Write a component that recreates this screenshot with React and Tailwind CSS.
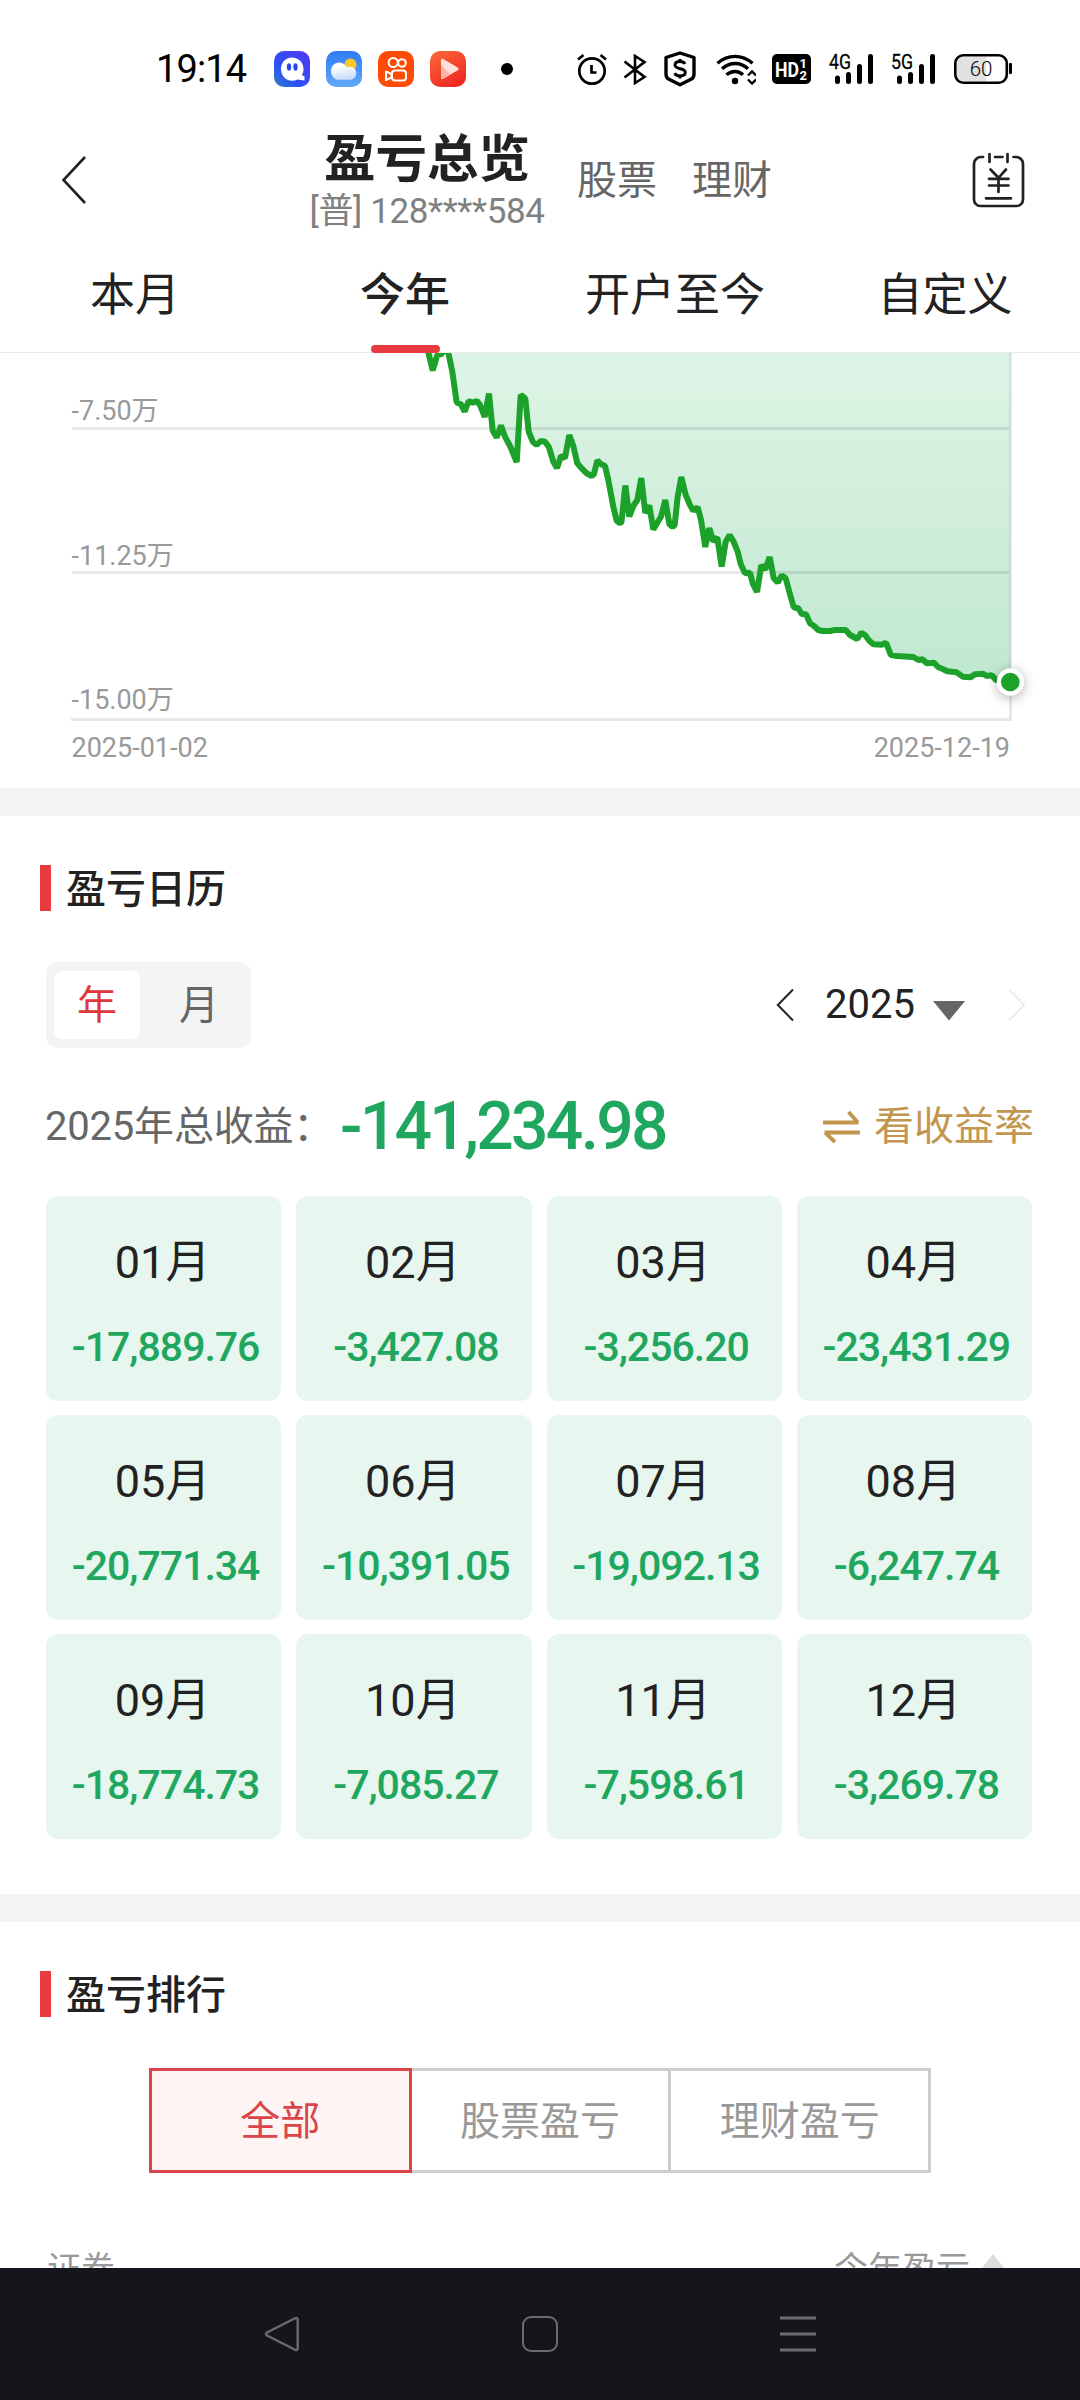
import { useState } from "react";
import clsx from "clsx";

const TABS = ["本月", "今年", "开户至今", "自定义"];

const MONTHS = [
  { label: "01月", value: "-17,889.76" },
  { label: "02月", value: "-3,427.08" },
  { label: "03月", value: "-3,256.20" },
  { label: "04月", value: "-23,431.29" },
  { label: "05月", value: "-20,771.34" },
  { label: "06月", value: "-10,391.05" },
  { label: "07月", value: "-19,092.13" },
  { label: "08月", value: "-6,247.74" },
  { label: "09月", value: "-18,774.73" },
  { label: "10月", value: "-7,085.27" },
  { label: "11月", value: "-7,598.61" },
  { label: "12月", value: "-3,269.78" },
];

const FILTERS = ["全部", "股票盈亏", "理财盈亏"];

// visible part of the curve, in chart pixels
const CURVE = [
  [428, -2], [432.7, 17.5], [437.3, 2], [441.7, 1], [444, -3], [448, -2], [452.3, 18.7], [456.7, 49.7],
  [460.7, 51], [464.7, 58.5], [468.7, 48], [472.7, 49.7], [476.7, 48], [480, 52], [484.7, 64], [489, 40.5],
  [492.7, 77.7], [496.7, 84.5], [501, 72.5], [505, 83.7], [510, 93], [516.7, 109], [520.7, 42], [525.3, 45.5],
  [528.7, 78.7], [532.7, 88.7], [536.7, 92], [540.7, 88], [545, 88.7], [549, 94.3], [553.3, 108.7], [557, 115],
  [561, 103], [565, 105], [569.3, 82], [573.3, 93], [577.3, 110.3], [581.7, 115.3], [586.7, 120.3], [591.7, 123],
  [594, 121], [597.3, 107.5], [601.3, 111.3], [605, 113], [608.3, 127], [613.3, 153.7], [616.7, 167.7], [620, 170.5],
  [621.5, 169], [625.3, 132.5], [629.3, 163.5], [633.3, 153], [637.3, 147], [641.3, 125], [645.3, 160], [649.3, 152.5],
  [653.3, 176.5], [657.3, 169.7], [661, 163.7], [665.3, 147], [669.3, 171], [672.7, 174], [674.7, 172], [677.7, 143.7],
  [681.3, 124], [685.7, 142], [690, 152], [693.3, 157.7], [697.7, 154.3], [701, 167], [705.3, 194], [709.3, 175],
  [713.3, 188.3], [717.3, 184.5], [721.7, 213.5], [725.7, 188.7], [729.7, 182], [733.3, 188], [737.7, 198.7], [740.7, 211],
  [745, 220.3], [750, 219.7], [752.7, 230.3], [757, 239], [761.3, 212.3], [765.3, 216.5], [769.7, 204], [773.7, 225.3],
  [777.7, 229.5], [781.7, 222.5], [785.7, 225.3], [789.3, 238.7], [793.7, 254.3], [798.3, 255.3], [801.7, 261], [806, 261.3],
  [810, 270.3], [814, 273], [818.3, 277], [822.7, 278], [830, 278], [835, 277], [845.7, 277], [850, 282],
  [857.3, 286], [861.3, 279.7], [865, 282], [869.3, 287.7], [873.3, 291.3], [881.7, 291.7], [886, 289.7], [890.7, 301.7],
  [896.7, 303], [913.3, 304], [918.3, 307], [922.7, 306.3], [926.7, 310.3], [934, 309.7], [938.3, 314.3], [943.3, 316.3],
  [947.3, 318.3], [956.7, 319.3], [962.7, 323.7], [970.7, 324.3], [975, 321.3], [982.7, 320.7], [986.7, 323], [991.7, 322.3],
  [996, 327], [1010.3, 329],
];

function Signal({ label }) {
  return (
    <svg className="overflow-visible" width="45" height="30" viewBox="0 0 45 30">
      <text x="0" y="15" fontSize="21" textLength="22" lengthAdjust="spacingAndGlyphs" stroke="#000" strokeWidth="0.3">{label}</text>
      <g stroke="#000" strokeWidth="5" strokeLinecap="round">
        <path d="M8.5 24v3.500M19.5 20.500v7M30.500 12.500v15M41.500 2.500v25" />
      </g>
    </svg>
  );
}

function StatusBar() {
  return (
    <div className="flex h-[128px] items-center pt-[10px] pl-[156px] text-black">
      <span className="w-[93px] text-[38px] leading-[44px] tracking-[-0.9px]">19:14</span>

      <svg className="ml-[25px]" width="36" height="36" viewBox="0 0 36 36">
        <defs>
          <linearGradient id="chat" x1="0" y1="1" x2="1" y2="0">
            <stop offset="0" stopColor="#2f7fc0" />
            <stop offset="0.35" stopColor="#2b52f5" />
            <stop offset="1" stopColor="#5236f5" />
          </linearGradient>
        </defs>
        <rect width="36" height="36" rx="10" fill="url(#chat)" />
        <path d="M18 6.500c6.500 0 11.500 5 11.500 11.500 0 2.500-.6 4.500-1.700 6.300l2.700 1v4.200l-7-1c-1.600.8-3.500 1.200-5.500 1.200C11.500 29.700 7 24.500 7 18S11.500 6.500 18 6.500z" fill="#fff" />
        <ellipse cx="15" cy="16" rx="2.200" ry="3.700" fill="#2b47f5" />
        <ellipse cx="21.500" cy="16" rx="2.200" ry="3.700" fill="#2b47f5" />
      </svg>

      <svg className="ml-4" width="36" height="36" viewBox="0 0 36 36">
        <defs>
          <linearGradient id="sky" x1="0" y1="0" x2="0" y2="1">
            <stop offset="0" stopColor="#2f7cf6" />
            <stop offset="1" stopColor="#62a8fa" />
          </linearGradient>
          <linearGradient id="cloud" x1="0" y1="0" x2="0.300" y2="1">
            <stop offset="0.300" stopColor="#fff" />
            <stop offset="1" stopColor="#c9def9" />
          </linearGradient>
        </defs>
        <rect width="36" height="36" rx="10" fill="url(#sky)" />
        <circle cx="24.500" cy="13.500" r="6" fill="#fdc62d" />
        <path d="M13 11.500c3.500 0 6.500 2 7.700 5a6.500 6.500 0 0 1 3.300-.8c3.500 0 6.300 2.800 6.300 6.300 0 4-2.800 6.800-6.500 6.800H13c-4.700 0-8-3.800-8-8.600s3.500-8.700 8-8.700z" fill="url(#cloud)" />
      </svg>

      <svg className="ml-4" width="36" height="36" viewBox="0 0 36 36">
        <rect width="36" height="36" rx="10" fill="#fd4a05" />
        <g fill="none" stroke="#fff" strokeWidth="2">
          <circle cx="15.200" cy="11.500" r="4.600" />
          <circle cx="24" cy="12" r="3.800" />
          <rect x="14" y="19.500" width="14" height="10" rx="3" />
          <path d="M8 20.500l5.500 2.500v3.500L8 29z" strokeLinejoin="round" />
        </g>
      </svg>

      <svg className="ml-4" width="36" height="36" viewBox="0 0 36 36">
        <defs>
          <linearGradient id="video" x1="0" y1="0" x2="0.600" y2="1">
            <stop offset="0" stopColor="#fb6a38" />
            <stop offset="1" stopColor="#f02a22" />
          </linearGradient>
        </defs>
        <rect width="36" height="36" rx="10" fill="url(#video)" />
        <path d="M11 9.500c0-1.500 1-2 2.200-1.400l14.500 8.500c1.200.8 1.200 1.800 0 2.600l-14.500 8.500c-1.200.7-2.200.2-2.200-1.300z" fill="#ffe1dc" />
        <path d="M11 14l9 9-6.800 4.600c-1.200.7-2.200.2-2.200-1.300z" fill="#fdb4a8" />
      </svg>

      <span className="ml-[35px] size-3 rounded-full bg-black" />

      {/* alarm */}
      <svg className="ml-[64px]" width="30" height="32" viewBox="0 0 30 32" fill="none" stroke="#000" strokeWidth="2.700">
        <circle cx="15" cy="18" r="12.700" />
        <path d="M14.500 12v7.500h5" />
        <path d="M1 6.500L6.500 2M29 6.500L23.500 2" />
      </svg>
      {/* bluetooth */}
      <svg className="ml-4" width="24" height="31" viewBox="0 0 24 31" fill="none" stroke="#000" strokeWidth="2.600">
        <path d="M1.500 7.500l20 15.500-9.500 6V2l9.500 6-20 15.500" />
      </svg>
      {/* shield */}
      <svg className="ml-[17px]" width="32" height="36" viewBox="0 0 32 36" fill="none" stroke="#000">
        <path d="M16 2l14 4.500v17c0 2-1 3.500-2.500 4.500L16 33.800 4.500 28C3 27 2 25.500 2 23.500v-17z" strokeWidth="3.400" strokeLinejoin="round" />
        <path d="M21 13c-.8-1.700-2.700-2.500-5-2.500-2.800 0-5 1.300-5 3.600 0 5 10.300 2.300 10.300 7.200 0 2.400-2.300 3.700-5.200 3.700-2.600 0-4.600-1-5.400-2.900M16 8v3M16 24.500v3" strokeWidth="2.900" />
      </svg>
      {/* wifi */}
      <svg className="ml-5" width="40" height="31" viewBox="0 0 40 31" fill="none" stroke="#000" strokeWidth="3.400">
        <path d="M1.500 9.300c10.500-9.300 24.500-9.300 35 0" />
        <path d="M6 14.800c8-7 18.500-7 26 0" />
        <path d="M10.500 20.800c5-4.500 12-4.500 16.500 0" />
        <circle cx="19" cy="27" r="3.200" fill="#000" stroke="none" />
        <path d="M32 21.500l4-4 4 4M32 25.500l4 4 4-4" strokeWidth="2.300" />
      </svg>
      {/* hd */}
      <svg className="ml-4" width="39" height="30" viewBox="0 0 39 30" fill="#fff" fontWeight="700">
        <rect width="39" height="30" rx="5" fill="#000" />
        <text x="3" y="22.500" fontSize="21" textLength="24" lengthAdjust="spacingAndGlyphs">HD</text>
        <text x="27.500" y="13.500" fontSize="13">1</text>
        <text x="27.500" y="26" fontSize="13">2</text>
      </svg>
      <div className="ml-[18px]"><Signal label="4G" /></div>
      <div className="ml-[17px]"><Signal label="5G" /></div>
      {/* battery */}
      <svg className="ml-[18px] overflow-visible" width="59" height="30" viewBox="0 0 59 30">
        <path d="M3 3h29v24H3z" fill="#e2e2e2" />
        <rect x="1.300" y="1.300" width="51.500" height="27.400" rx="8" fill="none" stroke="#000" strokeWidth="2.600" />
        <rect x="55" y="9" width="3" height="11" rx="1" />
        <text x="27" y="22" fontSize="20.500" fontWeight="300" textAnchor="middle">60</text>
      </svg>
    </div>
  );
}

function Header() {
  return (
    <div className="flex h-[104px] items-center pl-[61px] text-[#222]">
      <svg width="26" height="48" viewBox="0 0 26 48" fill="none" stroke="currentColor" strokeWidth="2.600">
        <path d="M24 1L2.500 24 24 47" />
      </svg>
      <div className="ml-[222px] flex w-[236px] flex-col items-center pt-[3px] whitespace-nowrap">
        <h1 className="text-[51.500px] leading-[60px] font-bold">盈亏总览</h1>
        <p className="text-[35px] leading-[44px] tracking-[-0.400px] text-[#808080]">[普] 128****584</p>
      </div>
      <span className="ml-[32px] pt-[2px] text-[40px] text-[#666]">股票</span>
      <span className="ml-[35px] pt-[2px] text-[40px] text-[#666]">理财</span>
      {/* statement icon */}
      <svg className="ml-[200px]" width="54" height="56" viewBox="0 0 54 56" fill="none" stroke="currentColor" strokeWidth="2.700" strokeLinecap="round">
        <path d="M11 5H8.500A7 7 0 0 0 2 12v35.500a6.500 6.500 0 0 0 6.500 6.500h36a6.500 6.500 0 0 0 6.500-6.500V12a7 7 0 0 0-7-7h-2.500" />
        <path d="M17.500 2v8M35.500 2v8M23 5h7.500" />
        <path d="M18.500 17.500l8 8.300 7.500-8.300M17 26.800h19.500M17 33.500h19.500M26.500 26v14M14 46.300h25" />
      </svg>
    </div>
  );
}

function Chart() {
  const line = CURVE.map((p) => p.join(",")).join(" ");
  return (
    <svg className="block" width="1080" height="435" viewBox="0 0 1080 435">
      <defs>
        <linearGradient id="area" gradientUnits="userSpaceOnUse" x1="0" y1="0" x2="0" y2="330">
          <stop offset="0" stopColor="#ddf5e6" />
          <stop offset="0.350" stopColor="#d5f0df" />
          <stop offset="1" stopColor="#bfe8cf" />
        </linearGradient>
        <filter id="dot" x="-100%" y="-100%" width="300%" height="300%">
          <feDropShadow dx="0" dy="2" stdDeviation="6" floodColor="#000" floodOpacity="0.320" />
        </filter>
      </defs>
      <polygon points={`${line} 1010.300,-10 428,-10`} fill="url(#area)" />
      <g fill="#000" fillOpacity="0.090">
        <rect x="72" y="74" width="937" height="3" />
        <rect x="72" y="218" width="937" height="3" />
        <rect x="71" y="365" width="941" height="3" />
        <rect x="1009" y="0" width="3" height="365" />
      </g>
      <polyline points={line} fill="none" stroke="#1ca22b" strokeWidth="6" strokeLinejoin="bevel" />
      <circle cx="1010.300" cy="329" r="13.500" fill="#fff" filter="url(#dot)" />
      <circle cx="1010.300" cy="329" r="9.300" fill="#1ca22b" />
      <g fill="#999" fontSize="27">
        <text x="71.500" y="67">-7.50万</text>
        <text x="71.500" y="212">-11.25万</text>
        <text x="71.500" y="356">-15.00万</text>
        <text x="71.500" y="404">2025-01-02</text>
        <text x="1010" y="404" textAnchor="end">2025-12-19</text>
      </g>
    </svg>
  );
}

function SectionTitle({ children }) {
  return (
    <div className="flex h-[46px] items-center pl-10">
      <span className="h-[46px] w-[11px] bg-[#e93b3f]" />
      <h2 className="ml-[15px] pt-[3px] text-[40px] leading-[46px] font-medium">{children}</h2>
    </div>
  );
}

function Calendar() {
  const [mode, setMode] = useState("年");

  return (
    <section className="h-[1078px] pt-[49px]">
      <SectionTitle>盈亏日历</SectionTitle>

      <div className="mt-[51px] flex h-[86px] items-center pl-[46px]">
        <div className="flex h-[86px] w-[205px] items-center gap-4 rounded-[12px] bg-[#f4f4f4] pl-2">
          {["年", "月"].map((m) => (
            <button
              key={m}
              onClick={() => setMode(m)}
              className={clsx(
                "h-[68px] w-[86px] rounded-[8px] pt-[2px] text-[40px] leading-[66px]",
                m === mode ? "bg-white text-[#e0393d]" : "text-[#666]"
              )}
            >
              {m}
            </button>
          ))}
        </div>
        <svg className="ml-[525px]" width="18" height="34" viewBox="0 0 18 34" fill="none" stroke="#222" strokeWidth="2">
          <path d="M17 1.500L1.800 17 17 32.500" />
        </svg>
        <span className="ml-[31px] w-[90px] text-[40px] leading-[46px]">2025</span>
        <svg className="mt-[12px] ml-[18px]" width="32" height="20" viewBox="0 0 32 20">
          <path d="M0 0h32L16 19.500z" fill="#666" />
        </svg>
        <svg className="ml-[43px]" width="18" height="34" viewBox="0 0 18 34" fill="none" stroke="#ebebeb" strokeWidth="2">
          <path d="M1 1.500L16.200 17 1 32.500" />
        </svg>
      </div>

      <div className="mt-[44px] flex h-[70px] items-center pr-[46px] pl-[45px] whitespace-nowrap">
        <span className="w-[295px] text-[40px] leading-[56px] tracking-[-0.200px] text-[#666]">2025年总收益：</span>
        <span className="text-[66px] leading-[70px] font-medium tracking-[-2.700px] text-[#1fa75f]">-141,234.98</span>
        <button className="ml-auto flex items-center text-[40px] leading-[56px] text-[#c2964e]">
          <svg className="mr-[14px]" width="37" height="34" viewBox="0 0 37 34" fill="none" stroke="currentColor" strokeWidth="3.800">
            <path d="M0 12.500h35.500M35 12.500L25.500 2M37 22.500H1.500M2 22.500L12 32" />
          </svg>
          看收益率
        </button>
      </div>

      <div className="mt-[34px] ml-[46px] grid w-[986px] grid-cols-4 gap-x-[15px] gap-y-[14px]">
        {MONTHS.map((m) => (
          <div key={m.label} className="flex h-[205px] flex-col items-center rounded-[12px] bg-[#e7f6ee] pt-[37px]">
            <span className="pr-[2px] text-[45px] leading-[60px]">{m.label}</span>
            <span className="mt-[29px] pl-[4px] text-[41px] leading-[50px] font-medium tracking-[-1px] text-[#1fa75f]">{m.value}</span>
          </div>
        ))}
      </div>
    </section>
  );
}

function Ranking() {
  const [active, setActive] = useState(0);

  return (
    <section className="h-[346px] overflow-hidden pt-[49px]">
      <SectionTitle>盈亏排行</SectionTitle>

      <div className="mt-[51px] ml-[149px] flex h-[105px] w-[782px]">
        {FILTERS.map((f, i) => (
          <button
            key={f}
            onClick={() => setActive(i)}
            className={clsx(
              "border-[3px] pt-[2px] text-[40px]",
              i === 0 ? "w-[263px]" : "w-[260px] border-l-0",
              i === active ? "border-[#d9454a] bg-[#fef4f3] text-[#d9454a]" : "border-[#ccc] text-[#999]"
            )}
          >
            {f}
          </button>
        ))}
      </div>

      <div className="mt-[71px] flex items-center pr-[76px] pl-[47px] text-[34px] leading-[50px] text-[#999]">
        <span>证券</span>
        <span className="ml-auto">今年盈亏</span>
        <svg className="mb-4 ml-[12px]" width="22" height="14" viewBox="0 0 22 14">
          <path d="M11 0l11 14H0z" fill="#ddd" />
        </svg>
      </div>
    </section>
  );
}

function NavBar() {
  return (
    <div className="flex h-[132px] items-center bg-[#15161b] pl-[264px]">
      <svg width="36" height="36" viewBox="0 0 36 36" fill="none" stroke="#6b6c70" strokeWidth="2.400" strokeLinejoin="round">
        <path d="M30.500 2.500L3 16.500q-2 1.500 0 3L30.500 33.500q3.200 1.500 3.200-1.500V4q0-3-3.200-1.500z" />
      </svg>
      <span className="ml-[222px] size-[36px] rounded-[9px] border-[2.500px] border-[#6b6c70]" />
      <svg className="ml-[222px]" width="36" height="36" viewBox="0 0 36 36" stroke="#6b6c70" strokeWidth="2.800">
        <path d="M0 2h36M0 18h36M0 34h36" />
      </svg>
    </div>
  );
}

export default function App() {
  const [tab, setTab] = useState(1);

  return (
    <div className="h-[2400px] w-[1080px] overflow-hidden bg-white font-[Roboto,'Noto_Sans_CJK_SC',sans-serif] text-[#222]">
      <StatusBar />
      <Header />

      <div className="grid h-[121px] grid-cols-4 border-b-[1px] border-[#eaeaea]">
        {TABS.map((t, i) => (
          <button key={t} onClick={() => setTab(i)} className="flex flex-col items-center pt-[33px]">
            <span className={clsx("text-[45px] leading-[62px]", i === tab && "font-medium")}>{t}</span>
            {i === tab && <span className="mt-[18px] h-2 w-[69px] rounded-full bg-[#e93b3f]" />}
          </button>
        ))}
      </div>

      <Chart />
      <div className="h-[28px] bg-[#f4f4f4]" />
      <Calendar />
      <div className="h-[28px] bg-[#f4f4f4]" />
      <Ranking />
      <NavBar />
    </div>
  );
}
